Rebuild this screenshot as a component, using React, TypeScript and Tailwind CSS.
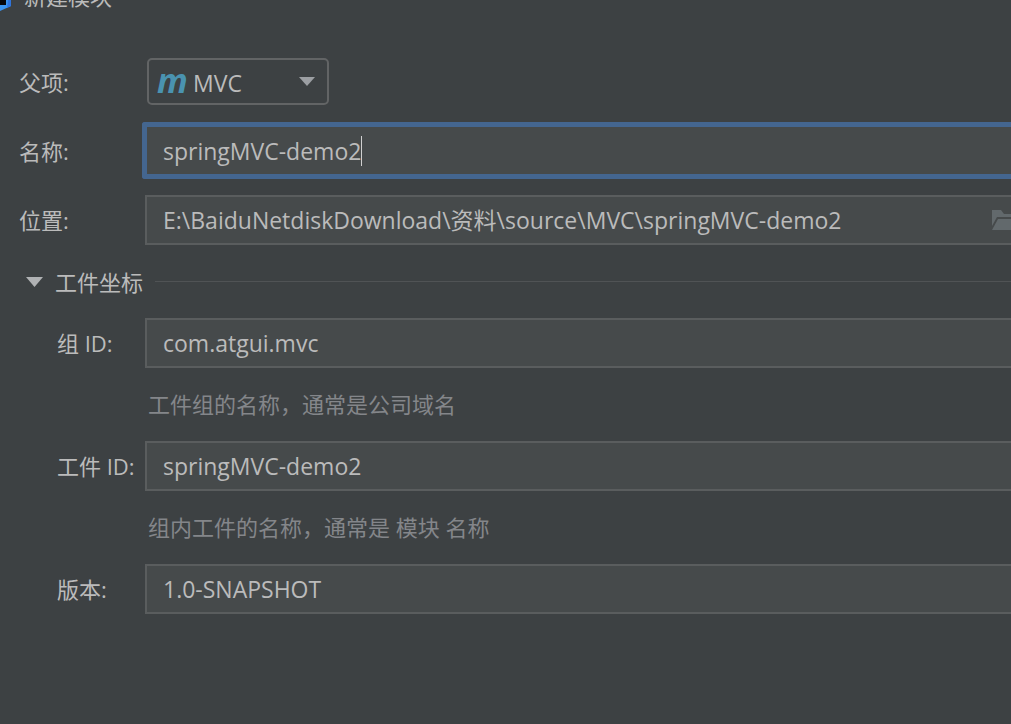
import { useState, type ReactNode } from "react";

const inputStyle =
  "min-w-0 flex-1 bg-transparent p-0 text-[23px] leading-8 text-[#bbbbbb] outline-none";

function Row({
  id,
  label,
  nested,
  children,
}: {
  id: string;
  label: string;
  nested?: boolean;
  children: ReactNode;
}) {
  return (
    <div className="flex items-center">
      <label
        htmlFor={id}
        className={
          nested
            ? "w-[145px] shrink-0 whitespace-nowrap pl-[57px]"
            : "w-[145px] shrink-0 whitespace-nowrap pl-[19px]"
        }
      >
        {label}
      </label>
      {children}
    </div>
  );
}

function Field({ children }: { children: ReactNode }) {
  return (
    <div className="flex h-[50px] min-w-0 flex-1 items-center border-2 border-r-0 border-[#5a5d5e] bg-[#464a4b] pl-4">
      {children}
    </div>
  );
}

export default function App() {
  const [name, setName] = useState("springMVC-demo2");
  const [location, setLocation] = useState(
    "E:\\BaiduNetdiskDownload\\资料\\source\\MVC\\springMVC-demo2"
  );
  const [groupId, setGroupId] = useState("com.atgui.mvc");
  const [artifactId, setArtifactId] = useState("springMVC-demo2");
  const [version, setVersion] = useState("1.0-SNAPSHOT");
  const [open, setOpen] = useState(true);

  return (
    <main className="min-h-screen overflow-hidden bg-[#3d4143] font-['Open_Sans','Noto_Sans_CJK_SC',sans-serif] text-[22px] leading-8 font-normal text-[#bbbbbb]">
      <header className="-mt-5 flex h-8 items-center">
        <svg className="h-8 w-6 shrink-0" viewBox="0 0 24 32" aria-hidden="true">
          <path d="M0 12H11V26L0 31Z" fill="#3a94f0" />
          <path d="M0 12H6V25H0Z" fill="#05060a" />
          <path d="M9 12H11V26L7 28Z" fill="#2f74dc" />
        </svg>
        <h1>新建模块</h1>
      </header>

      <form className="flex flex-col pt-[46px]">
        <Row id="parent" label="父项:">
          <div className="relative ml-0.5 flex h-[47px] w-[182px] items-center rounded-[5px] border-2 border-[#626465]">
            <span
              className="absolute top-1 left-2 text-[34px] leading-8 font-bold text-[#4a93b0] italic"
              aria-hidden="true"
            >
              m
            </span>
            <select
              id="parent"
              className="h-full w-full appearance-none bg-transparent pt-0.5 pl-11 text-[23px] text-[#bbbbbb] outline-none"
            >
              <option>MVC</option>
            </select>
            <svg
              className="pointer-events-none absolute right-3 h-[9px] w-4"
              viewBox="0 0 16 9"
              aria-hidden="true"
            >
              <path d="M0 0H16L8 9Z" fill="#9c9fa3" />
            </svg>
          </div>
        </Row>

        <div className="mt-[17px]">
          <Row id="name" label="名称:">
            <div className="-ml-[3px] flex h-[57px] min-w-0 flex-1 items-center rounded-l-[3px] border-[5px] border-r-0 border-[#446690] bg-[#464a4b] pl-4">
              <input
                id="name"
                className="field-sizing-content bg-transparent p-0 text-[23px] leading-8 text-[#bbbbbb] caret-transparent outline-none"
                value={name}
                onChange={(e) => setName(e.target.value)}
              />
              <span className="h-[30px] w-px bg-[#d0d0d0]" />
            </div>
          </Row>
        </div>

        <div className="mt-4">
          <Row id="location" label="位置:">
            <Field>
              <input
                id="location"
                className={inputStyle}
                value={location}
                onChange={(e) => setLocation(e.target.value)}
              />
              <button
                type="button"
                aria-label="Browse"
                className="w-5 shrink-0 overflow-hidden"
              >
                <svg className="h-[22px] w-7" viewBox="0 0 28 22">
                  <path
                    d="M1 1H10L13 5H25V8H6L1 17Z"
                    fill="#62696c"
                  />
                  <path d="M7 10H28L22 21H1Z" fill="#62696c" />
                </svg>
              </button>
            </Field>
          </Row>
        </div>

        <div className="flex h-[73px] items-center">
          <button
            type="button"
            aria-expanded={open}
            onClick={() => setOpen(!open)}
            className="flex items-center gap-3 pl-[26px]"
          >
            <svg className="h-[10px] w-[17px]" viewBox="0 0 17 10" aria-hidden="true">
              <path d="M0 0H17L8.5 10Z" fill="#b0b2b4" />
            </svg>
            工件坐标
          </button>
          <hr className="ml-3 flex-1 border-[#505355]" />
        </div>

        {open && (
          <section>
            <Row id="group" label="组 ID:" nested>
              <Field>
                <input
                  id="group"
                  className={inputStyle}
                  value={groupId}
                  onChange={(e) => setGroupId(e.target.value)}
                />
              </Field>
            </Row>
            <p className="flex h-[73px] items-center pb-0.5 pl-[148px] text-[#84868a]">
              工件组的名称，通常是公司域名
            </p>
            <Row id="artifact" label="工件 ID:" nested>
              <Field>
                <input
                  id="artifact"
                  className={inputStyle}
                  value={artifactId}
                  onChange={(e) => setArtifactId(e.target.value)}
                />
              </Field>
            </Row>
            <p className="flex h-[73px] items-center pb-0.5 pl-[148px] text-[#84868a]">
              组内工件的名称，通常是 模块 名称
            </p>
            <Row id="version" label="版本:" nested>
              <Field>
                <input
                  id="version"
                  className={inputStyle}
                  value={version}
                  onChange={(e) => setVersion(e.target.value)}
                />
              </Field>
            </Row>
          </section>
        )}
      </form>
    </main>
  );
}
